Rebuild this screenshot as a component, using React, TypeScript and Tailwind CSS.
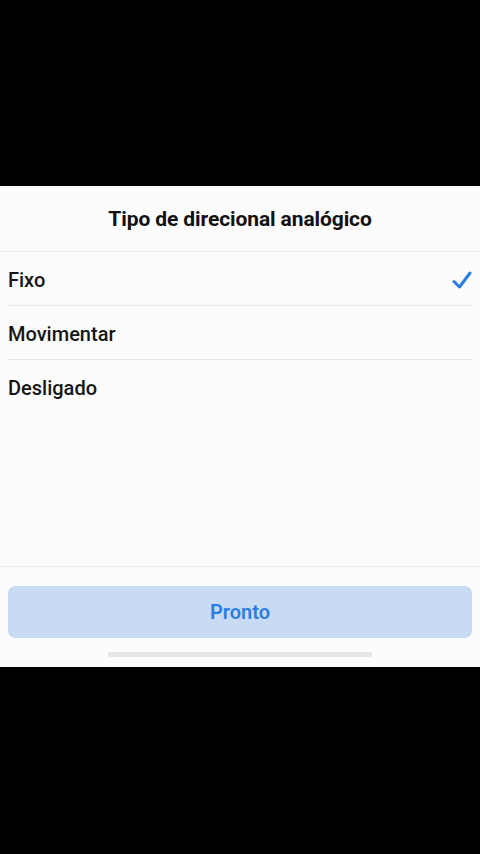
import { useState } from "react";

const options = ["Fixo", "Movimentar", "Desligado"];

export default function App() {
  const [selected, setSelected] = useState("Fixo");

  return (
    <div
      className="flex h-[854px] w-[480px] flex-col bg-black"
      style={{ fontFamily: "Roboto, 'Noto Sans', sans-serif" }}
    >
      <div className="h-[186px] shrink-0" />

      <div className="flex h-[481px] shrink-0 flex-col bg-[#fcfcfd]">
        {/* header */}
        <div className="flex h-[66px] items-center justify-center border-b border-[#ececef] pt-[2px]">
          <h1 className="text-[21px] font-bold tracking-[-0.1px] text-[#111]">
            Tipo de direcional analógico
          </h1>
        </div>

        {/* options */}
        <div className="flex flex-col">
          {options.map((opt, i) => (
            <button
              key={opt}
              onClick={() => setSelected(opt)}
              className={`mx-2 flex h-[54px] items-center justify-between pt-[2px] text-left ${
                i < options.length - 1 ? "border-b border-[#e8e8eb]" : ""
              }`}
            >
              <span className="text-[20px] font-medium text-[#151515]">{opt}</span>
              {selected === opt && (
                <svg width="20" height="18" viewBox="0 0 20 18" fill="none">
                  <path
                    d="M2 10.5 L7.5 16 L18 2"
                    stroke="#2a7de1"
                    strokeWidth="3"
                    strokeLinecap="round"
                    strokeLinejoin="round"
                  />
                </svg>
              )}
            </button>
          ))}
        </div>

        <div className="flex-1" />

        {/* footer */}
        <div className="flex flex-col items-center border-t border-[#ececef] px-2 pt-[19px]">
          <button className="flex h-[52px] w-full items-center justify-center rounded-[7px] bg-[#c9dbf3]">
            <span className="text-[20px] font-semibold text-[#2a7de1]">Pronto</span>
          </button>
          <div className="mt-[14px] h-[5px] w-[264px] rounded-full bg-[#e6e6e6]" />
          <div className="h-[10px]" />
        </div>
      </div>

      <div className="flex-1" />
    </div>
  );
}
